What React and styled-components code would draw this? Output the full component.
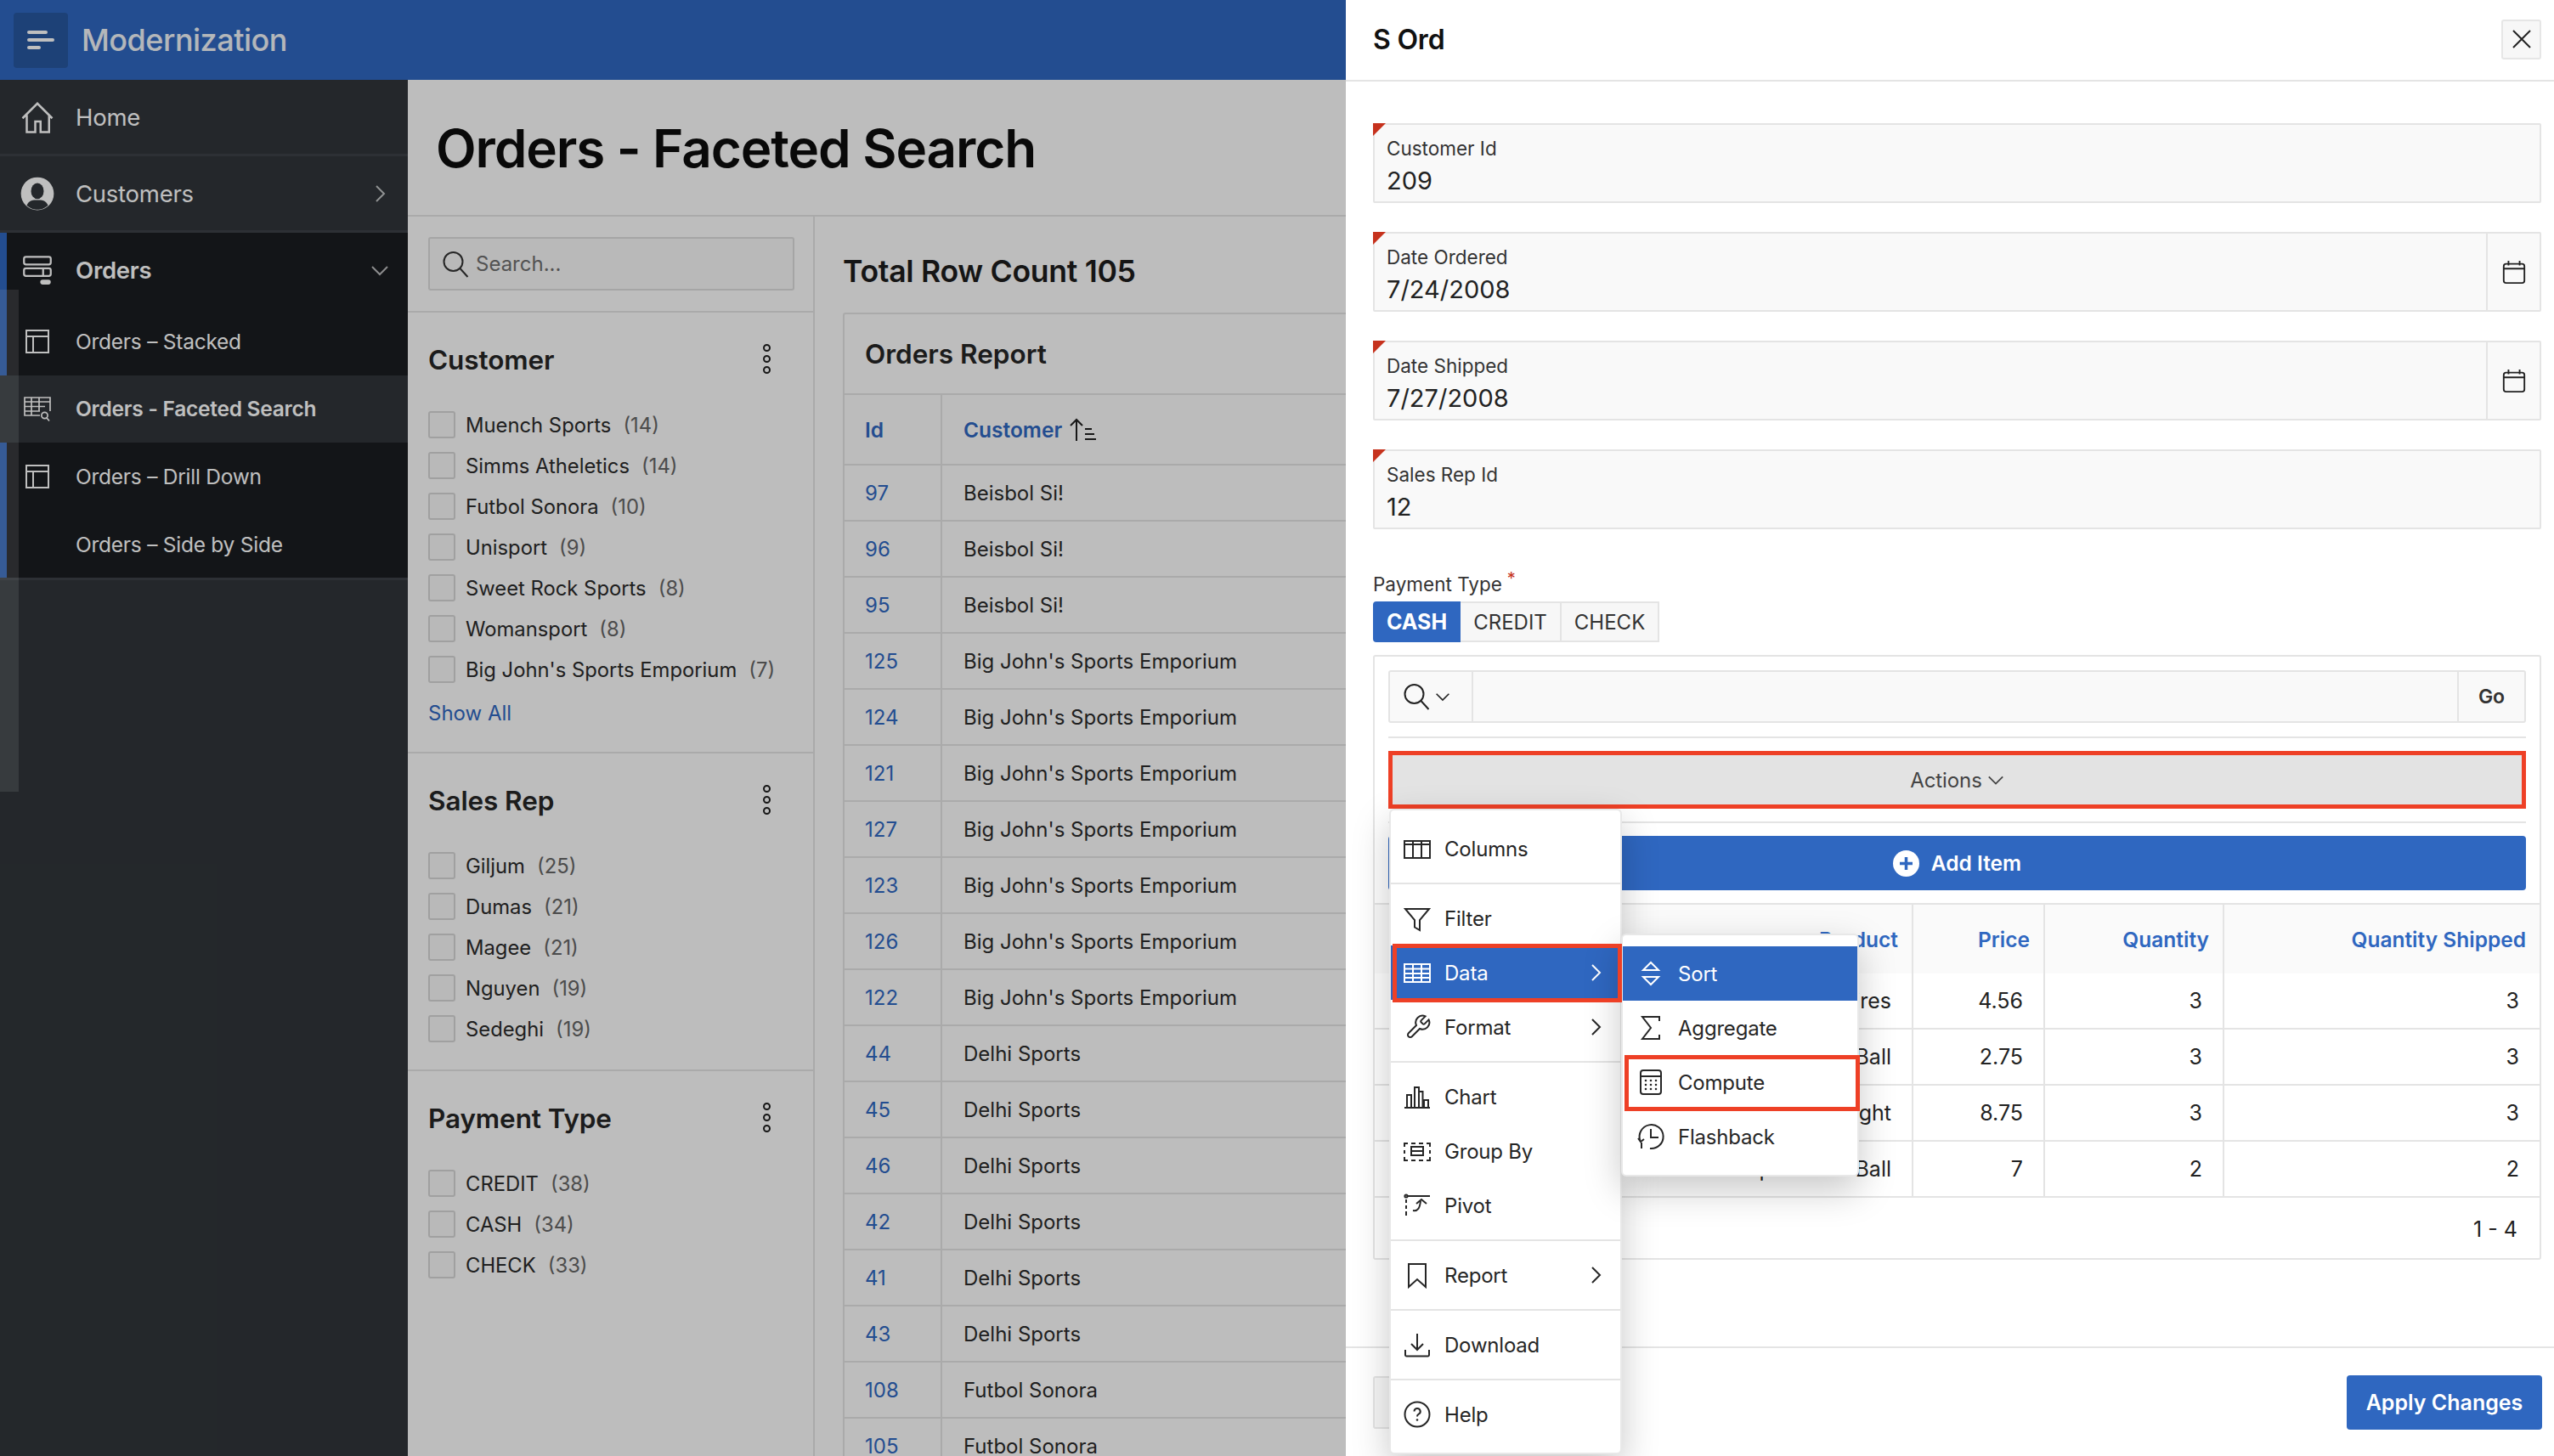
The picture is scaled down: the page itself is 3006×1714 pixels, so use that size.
import React from 'react';
import styled, { createGlobalStyle } from 'styled-components';

const Global = createGlobalStyle`
  html, body { margin: 0; padding: 0; background: #fff; }
  * { box-sizing: border-box; }
  body { font-family: Inter, "Noto Sans", "Liberation Sans", sans-serif; color: #1f1f1f; }
`;

const BLUE = '#2f67c0';
const RED = '#ee4026';
const LINE = '#e4e4e4';

const Svg = ({ size = 32, children, sw = 2, ...rest }) => (
  <svg width={size} height={size} viewBox="0 0 32 32" fill="none" stroke="currentColor" strokeWidth={sw} {...rest}>
    {children}
  </svg>
);

const icons = {
  home: <path d="M2 17 16 3l14 14M6 14v16h8V20h5v10h8V14" />,
  person: (
    <>
      <circle cx="16" cy="16" r="15.5" fill="currentColor" stroke="none" />
      <ellipse cx="16" cy="13.5" rx="6" ry="7.5" fill="#30353a" stroke="none" />
      <path d="M6 27c2-5 6-5 10-5s8 0 10 5c-3 3-7 4-10 4s-7-1-10-4z" fill="#30353a" stroke="none" />
    </>
  ),
  stack: (
    <>
      <rect x="2" y="2" width="28" height="8" rx="2" />
      <rect x="2" y="14" width="28" height="8" rx="2" />
      <path d="M22 14v8" />
      <rect x="19" y="26" width="11" height="5" rx="2.5" fill="currentColor" stroke="none" />
    </>
  ),
  layout: <path d="M3 3h26v26H3zM3 10h26M11 10v19" />,
  facet: (
    <>
      <path d="M19 24H1V3h30v16M1 8h30M1 13.5h24M1 19h18M9 3v21M18 3v16" strokeWidth="1.7" />
      <circle cx="24.5" cy="24" r="3.6" strokeWidth="1.7" />
      <path d="m27 27 3 3.5" strokeWidth="1.7" />
    </>
  ),
  search: (
    <>
      <circle cx="13.5" cy="13" r="11" />
      <path d="m21.5 21 9 10" />
    </>
  ),
  columns: <path d="M1 7h30v20H1zM1 11h30M11 7v20M21 7v20" />,
  filter: <path d="M2 5h28L19 18v12l-6-3.5V18z" />,
  data: <path d="M1 6h30v21H1zM1 11.5h30M1 17h30M1 22h30M11 6v21M21 6v21" />,
  wrench: (
    <path d="M20.6 8.4a1.3 1.3 0 0 0 0 1.9l2.1 2.1a1.3 1.3 0 0 0 1.9 0l5-5a8 8 0 0 1-10.6 10.6l-9.2 9.2a2.8 2.8 0 0 1-4-4l9.2-9.2A8 8 0 0 1 25.6 3.4z" />
  ),
  chart: <path d="M1 29h30M4 29V14h5v15M13 29V5h5v24M18 10h4.500v19M24 29V20h5v9" />,
  group: (
    <>
      <path d="M1 11V7h4M9 7h5M18 7h5M27 7h4v4M1 15v4M31 15v4M1 23v4h4M9 27h5M18 27h5M27 27h4v-4" />
      <rect x="9" y="11" width="14" height="10" />
      <path d="M9 16h14" />
    </>
  ),
  pivot: (
    <>
      <circle cx="3" cy="5" r="1.6" />
      <path d="M5 5h26M3 9v4M3 16v4M3 23v5" />
      <path d="M11 22c6 1 8-3 9-11M15 14l6-5 6 5" />
    </>
  ),
  bookmark: <path d="M6 3h20v27l-10-9-10 9z" />,
  download: <path d="M16 3v19M9 15l7 7 7-7M2 22v6a1.500 1.500 0 0 0 1.500 1.500h25A1.500 1.500 0 0 0 30 28v-6" />,
  help: (
    <>
      <circle cx="16" cy="16" r="14.500" />
      <path d="M12.500 12.500a3.600 3.600 0 1 1 5.300 3.200c-1.200.7-1.800 1.400-1.800 2.800" />
      <circle cx="16" cy="22.500" r="1.300" fill="currentColor" stroke="none" />
    </>
  ),
  sort: <path d="M7 12 16 3l9 9zM7 20l9 9 9-9z" />,
  sigma: <path d="M26 8V3H6l10 13L6 29h20v-5" />,
  calc: (
    <>
      <rect x="4" y="2" width="24" height="28" rx="3" />
      <path d="M4 9h24" />
      <path d="M10 14h.01M16 14h.01M22 14h.01M10 19h.01M16 19h.01M22 19h.01M10 24h.01M16 24h.01M22 24h.01" strokeWidth="2.600" strokeLinecap="round" />
    </>
  ),
  flash: (
    <>
      <path d="M3.500 21A14 14 0 1 1 15 30" />
      <path d="M16 7v10h9M1 18l3 4 4-3M5 30v-7" />
    </>
  ),
  calendar: (
    <>
      <rect x="3" y="6" width="26" height="24" rx="3" />
      <path d="M3 12h26M9 2v6M23 2v6" />
    </>
  ),
};

const Icon = ({ name, size, sw }) => <Svg size={size} sw={sw}>{icons[name]}</Svg>;

const Chevron = ({ dir = 'right', size = 22 }) => (
  <svg width={size} height={size} viewBox="0 0 22 22" fill="none" stroke="currentColor" strokeWidth="2">
    <path d={dir === 'right' ? 'M7 2l9 9-9 9' : 'M2 7l9 9 9-9'} />
  </svg>
);

const Stage = styled.div`
  position: relative;
  width: 3006px;
  height: 1714px;
  overflow: hidden;
  background: #fcfcfc;
`;

const TopBar = styled.header`
  height: 94px;
  background: #2f67c0;
  display: flex;
  align-items: center;
  padding-left: 16px;
  gap: 16px;
`;

const MenuToggle = styled.div`
  width: 64px;
  height: 65px;
  border-radius: 4px;
  background: #27579f;
  display: flex;
  align-items: center;
  justify-content: center;
  color: #fff;
`;

const Brand = styled.div`
  font-size: 36px;
  font-weight: 500;
  color: #f1f4f9;
  letter-spacing: -0.5px;
`;

const Body = styled.div`
  display: flex;
  height: 1620px;
`;

const Sidebar = styled.nav`
  position: relative;
  width: 480px;
  flex: none;
  background: #30353a;
`;

const NavRow = styled.div`
  display: flex;
  align-items: center;
  height: ${(p) => p.$h}px;
  padding: 0 24px;
  color: #fff;
  font-size: 27.5px;
  border-bottom: ${(p) => (p.$line ? '3px solid #3c4147' : 'none')};
  background: ${(p) => (p.$bg ? p.$bg : 'transparent')};
`;

const NavIcon = styled.span`
  width: 40px;
  flex: none;
  display: flex;
  justify-content: center;
  margin-right: 25px;
`;

const NavLabel = styled.span`
  flex: 1;
  font-weight: ${(p) => (p.$bold ? 600 : 400)};
  letter-spacing: -0.25px;
`;

const NavChevron = styled.span`
  display: flex;
  opacity: 0.7;
  margin-right: -2px;
`;

const OrdersGroup = styled.div`
  position: relative;
  background: #1a1c20;
  border-bottom: 3px solid #3c4147;
  box-shadow: inset 8px 0 0 #2f67c0;
`;

const SubRow = styled(NavRow)`
  height: 79.6px;
  font-size: 24.5px;
`;

const ScrollGhost = styled.div`
  position: absolute;
  left: 0;
  top: 247px;
  width: 22px;
  height: 591px;
  background: rgba(255, 255, 255, 0.13);
`;

const Main = styled.main`
  flex: 1;
  min-width: 0;
`;

const TitleBar = styled.div`
  height: 161px;
  padding: 2px 0 0 33px;
  display: flex;
  align-items: center;
  border-bottom: 2px solid #e3e3e3;
`;

const PageTitle = styled.h1`
  margin: 0;
  font-size: 62px;
  font-weight: 600;
  color: #0c0c0c;
  letter-spacing: -1.1px;
`;

const Columns = styled.div`
  display: flex;
`;

const Facets = styled.aside`
  width: 479px;
  flex: none;
  border-right: 2px solid #e3e3e3;
  height: 1460px;
`;

const SearchRow = styled.div`
  padding: 24px 22px 24px 24px;
  border-bottom: 2px solid #e3e3e3;
`;

const SearchBox = styled.div`
  height: 63px;
  border: 2px solid #dcdcdc;
  border-radius: 3px;
  background: #f7f7f7;
  display: flex;
  align-items: center;
  gap: 8px;
  padding-left: 14px;
  color: #333;
  font-size: 24px;
  span { color: #6f6f6f; }
`;

const FacetGroup = styled.section`
  padding: 35px 24px ${(p) => p.$pb}px;
  border-bottom: ${(p) => (p.$last ? 'none' : '2px solid #e3e3e3')};
`;

const FacetHead = styled.div`
  height: 40px;
  display: flex;
  align-items: center;
  justify-content: space-between;
  padding-right: 26px;
  margin-bottom: 33px;
  font-size: 31.5px;
  font-weight: 600;
  color: #262626;
  letter-spacing: -0.1px;
`;

const Kebab = styled.span`
  display: flex;
  flex-direction: column;
  gap: 4px;
  margin-top: -2px;
  i {
    display: block;
    width: 9px;
    height: 9px;
    border: 2px solid #1f1f1f;
    border-radius: 50%;
  }
`;

const FacetItem = styled.label`
  height: 48px;
  display: flex;
  align-items: center;
  gap: 12px;
  font-size: 23.8px;
  color: #2b2b2b;
  white-space: nowrap;
  em {
    font-style: normal;
    color: #666;
    margin-left: 14px;
  }
`;

const Check = styled.span`
  width: 32px;
  height: 32px;
  border: 2px solid #d6d6d6;
  border-radius: 3px;
  background: #f7f7f7;
  flex: none;
`;

const ShowAll = styled.div`
  margin-top: 14px;
  height: 28px;
  line-height: 28px;
  font-size: 24px;
  color: #2f67c0;
`;

const ReportArea = styled.div`
  flex: 1;
  min-width: 0;
  padding: 0 0 0 33px;
`;

const RowCount = styled.h2`
  margin: 0;
  height: 113px;
  padding-top: 42px;
  font-size: 35.6px;
  font-weight: 600;
  line-height: 46px;
  color: #1c1c1c;
  letter-spacing: -0.3px;
`;

const ReportCard = styled.div`
  width: 1600px;
  border: 2px solid #e3e3e3;
  border-radius: 3px;
`;

const ReportTitle = styled.div`
  height: 95px;
  padding-left: 24px;
  display: flex;
  align-items: center;
  font-size: 31.5px;
  font-weight: 600;
  color: #262626;
  border-bottom: 2px solid #e3e3e3;
`;

const ReportGrid = styled.div`
  display: grid;
  grid-template-columns: 115px 1fr;
  grid-template-rows: 83px;
  grid-auto-rows: 66px;
`;

const HeadCell = styled.div`
  display: flex;
  align-items: center;
  gap: 8px;
  padding-left: ${(p) => (p.$first ? 24 : 25)}px;
  font-size: 24.5px;
  font-weight: 600;
  color: #2f67c0;
  background: #fbfbfb;
  border-right: ${(p) => (p.$first ? '2px solid #e3e3e3' : 'none')};
  border-bottom: 2px solid #e3e3e3;
`;

const Cell = styled.div`
  display: flex;
  align-items: center;
  padding-left: ${(p) => (p.$link ? 24 : 25)}px;
  font-size: 24px;
  color: ${(p) => (p.$link ? '#2f67c0' : '#2b2b2b')};
  border-right: ${(p) => (p.$link ? '2px solid #e3e3e3' : 'none')};
  border-bottom: 2px solid #e3e3e3;
`;

const Scrim = styled.div`
  position: absolute;
  inset: 0;
  background: rgba(0, 0, 0, 0.25);
`;

const Dialog = styled.div`
  position: absolute;
  top: 0;
  right: 0;
  bottom: 0;
  width: 1422px;
  background: #fff;
  display: flex;
  flex-direction: column;
`;

const DialogHead = styled.div`
  height: 96px;
  flex: none;
  display: flex;
  align-items: center;
  justify-content: space-between;
  padding: 0 15px 2px 32px;
  border-bottom: 2px solid ${LINE};
`;

const DialogTitle = styled.div`
  font-size: 32px;
  font-weight: 600;
  color: #111;
  letter-spacing: -0.2px;
`;

const CloseBtn = styled.div`
  width: 47px;
  height: 47px;
  border: 2px solid #e6e6e6;
  border-radius: 3px;
  background: #f7f7f7;
  display: flex;
  align-items: center;
  justify-content: center;
  color: #222;
`;

const DialogBody = styled.div`
  flex: 1;
  padding: 49px 15px 0 32px;
  display: flex;
  flex-direction: column;
`;

const FieldBox = styled.div`
  position: relative;
  height: 94px;
  margin-bottom: 34px;
  display: flex;
  border: 2px solid ${LINE};
  border-radius: 2px;
  background: #f9f9f9;
  &::before {
    content: '';
    position: absolute;
    top: -2px;
    left: -2px;
    width: 15px;
    height: 15px;
    background: #c6321d;
    clip-path: polygon(0 0, 100% 0, 0 100%);
  }
`;

const FieldText = styled.div`
  flex: 1;
  padding: 14px 0 0 14px;
`;

const FieldLabel = styled.div`
  font-size: 22.5px;
  line-height: 27px;
  color: #333;
`;

const FieldValue = styled.div`
  margin-top: 7px;
  font-size: 29px;
  line-height: 36px;
  color: #222;
`;

const FieldAddon = styled.div`
  width: 63px;
  flex: none;
  border-left: 2px solid ${LINE};
  display: flex;
  align-items: center;
  justify-content: center;
  color: #222;
`;

const RadioLabel = styled.div`
  margin-top: 15px;
  height: 36px;
  line-height: 32px;
  font-size: 22.5px;
  color: #333;
  sup {
    color: #c6321d;
    font-size: 20px;
    line-height: 0;
    margin-left: 6px;
  }
`;

const RadioRow = styled.div`
  display: flex;
  margin-bottom: 15px;
`;

const RadioBtn = styled.div`
  height: 48px;
  display: flex;
  align-items: center;
  padding: 0 ${(p) => (p.$on ? 16 : 15)}px;
  font-size: ${(p) => (p.$on ? 25 : 24)}px;
  font-weight: ${(p) => (p.$on ? 700 : 400)};
  color: ${(p) => (p.$on ? '#fff' : '#333')};
  background: ${(p) => (p.$on ? BLUE : '#f7f7f7')};
  border: ${(p) => (p.$on ? 'none' : `2px solid ${LINE}`)};
  border-left: none;
  border-radius: ${(p) => (p.$on ? '4px 0 0 4px' : '0')};
`;

const GridCard = styled.div`
  position: relative;
  height: 712px;
  border: 2px solid ${LINE};
  border-radius: 3px;
  padding: 16px 0 0;
`;

const GridTools = styled.div`
  padding: 0 16px;
`;

const SearchBar = styled.div`
  height: 62px;
  display: flex;
  border: 2px solid ${LINE};
  border-radius: 3px;
  background: #f9f9f9;
`;

const SearchPick = styled.div`
  width: 98px;
  flex: none;
  display: flex;
  align-items: center;
  gap: 6px;
  padding-left: 15px;
  color: #222;
  border-right: 2px solid ${LINE};
`;

const SearchFill = styled.div`
  flex: 1;
`;

const GoBtn = styled.div`
  width: 79px;
  flex: none;
  display: flex;
  align-items: center;
  justify-content: center;
  font-size: 23px;
  font-weight: 600;
  color: #333;
  border-left: 2px solid ${LINE};
`;

const ToolRule = styled.div`
  height: 2px;
  margin-top: 16px;
  background: ${LINE};
`;

const ActionsBtn = styled.div`
  height: 68px;
  margin-top: 15px;
  display: flex;
  align-items: center;
  justify-content: center;
  gap: 6px;
  font-size: 24px;
  letter-spacing: -0.1px;
  color: #444;
  background: #e3e3e3;
  border: 5px solid ${RED};
`;

const AddRule = styled.div`
  height: 2px;
  margin-top: 15px;
  background: ${LINE};
`;

const AddBtn = styled.div`
  height: 64px;
  margin-top: 15px;
  display: flex;
  align-items: center;
  justify-content: center;
  gap: 14px;
  background: ${BLUE};
  border-radius: 4px;
  font-size: 24.5px;
  font-weight: 600;
  color: #fff;
`;

const PlusDisc = styled.span`
  width: 31px;
  height: 31px;
  border-radius: 50%;
  background: #fff;
  color: ${BLUE};
  display: flex;
  align-items: center;
  justify-content: center;
`;

const ItemGrid = styled.div`
  margin-top: 15px;
  display: grid;
  grid-template-columns: 634px 155px 211px 1fr;
  grid-template-rows: 81px;
  grid-auto-rows: 66px;
  border-top: 2px solid ${LINE};
`;

const ItemHead = styled.div`
  display: flex;
  align-items: center;
  justify-content: flex-end;
  padding-right: 16px;
  background: #fafafa;
  font-size: 24.5px;
  font-weight: 600;
  color: ${BLUE};
  border-right: ${(p) => (p.$end ? 'none' : `2px solid ${LINE}`)};
`;

const ItemCell = styled.div`
  display: flex;
  align-items: center;
  justify-content: flex-end;
  padding-right: 24px;
  font-size: 25px;
  color: #222;
  border-right: ${(p) => (p.$end ? 'none' : `2px solid ${LINE}`)};
  border-bottom: 2px solid ${LINE};
`;

const Pager = styled.div`
  height: 74px;
  display: flex;
  align-items: center;
  justify-content: flex-end;
  padding-right: 26px;
  font-size: 25px;
  color: #222;
`;

const DialogFoot = styled.div`
  height: 129px;
  flex: none;
  display: flex;
  align-items: center;
  justify-content: space-between;
  padding: 0 14px 0 32px;
  border-top: 2px solid ${LINE};
`;

const CancelBtn = styled.div`
  width: 110px;
  height: 62px;
  border: 2px solid ${LINE};
  border-radius: 3px;
  background: #f7f7f7;
`;

const ApplyBtn = styled.div`
  width: 230px;
  height: 64px;
  display: flex;
  align-items: center;
  justify-content: center;
  background: ${BLUE};
  border-radius: 4px;
  font-size: 25px;
  font-weight: 600;
  color: #fff;
`;

const Menu = styled.div`
  position: absolute;
  left: ${(p) => p.$x}px;
  top: ${(p) => p.$y}px;
  width: ${(p) => p.$w}px;
  padding: 13px 0;
  background: #fff;
  border: 2px solid #e8e8e8;
  border-radius: 6px;
  box-shadow: 0 16px 44px rgba(0, 0, 0, 0.22);
`;

const MenuRule = styled.div`
  height: 2px;
  margin: 8px 0;
  background: ${LINE};
`;

const MenuItem = styled.div`
  position: relative;
  height: 64px;
  display: flex;
  align-items: center;
  padding: 0 18px 0 ${(p) => p.$pl}px;
  font-size: 24px;
  letter-spacing: -0.2px;
  color: ${(p) => (p.$on ? '#fff' : '#262626')};
  background: ${(p) => (p.$on ? BLUE : 'transparent')};
  span.label { flex: 1; margin-left: 16px; }
  ${(p) =>
    p.$mark &&
    `&::after {
      content: '';
      position: absolute;
      z-index: 3;
      inset: ${p.$mark};
      border: 5px solid ${RED};
    }`}
`;

const reportRows = [
  ['97', 'Beisbol Si!'], ['96', 'Beisbol Si!'], ['95', 'Beisbol Si!'],
  ['125', "Big John's Sports Emporium"], ['124', "Big John's Sports Emporium"],
  ['121', "Big John's Sports Emporium"], ['127', "Big John's Sports Emporium"],
  ['123', "Big John's Sports Emporium"], ['126', "Big John's Sports Emporium"],
  ['122', "Big John's Sports Emporium"], ['44', 'Delhi Sports'], ['45', 'Delhi Sports'],
  ['46', 'Delhi Sports'], ['42', 'Delhi Sports'], ['41', 'Delhi Sports'], ['43', 'Delhi Sports'],
  ['108', 'Futbol Sonora'], ['105', 'Futbol Sonora'],
];

const facetGroups = [
  {
    name: 'Customer', pb: 31, more: true,
    items: [['Muench Sports', 14], ['Simms Atheletics', 14], ['Futbol Sonora', 10], ['Unisport', 9], ['Sweet Rock Sports', 8], ['Womansport', 8], ["Big John's Sports Emporium", 7]],
  },
  {
    name: 'Sales Rep', pb: 24,
    items: [['Giljum', 25], ['Dumas', 21], ['Magee', 21], ['Nguyen', 19], ['Sedeghi', 19]],
  },
  {
    name: 'Payment Type', pb: 24, last: true,
    items: [['CREDIT', 38], ['CASH', 34], ['CHECK', 33]],
  },
];

const orderLines = [
  ['Tires', '4.56', 3, 3],
  ['Soccer Ball', '2.75', 3, 3],
  ['Bike Light', '8.75', 3, 3],
  ['World Cup Soccer Ball', '7', 2, 2],
];

const fields = [
  { label: 'Customer Id', value: '209' },
  { label: 'Date Ordered', value: '7/24/2008', date: true },
  { label: 'Date Shipped', value: '7/27/2008', date: true },
  { label: 'Sales Rep Id', value: '12' },
];

const Item = ({ icon, label, chevron, on, mark, sub }) => (
  <MenuItem $on={on} $mark={mark} $pl={sub ? 17 : 15}>
    <Icon name={icon} />
    <span className="label">{label}</span>
    {chevron && <Chevron />}
  </MenuItem>
);

export default function App() {
  return (
    <Stage>
      <Global />
      <TopBar>
        <MenuToggle>
          <svg width="32" height="26" viewBox="0 0 32 26" fill="#fff">
            <rect x="0" y="2" width="24" height="4" rx="2" />
            <rect x="0" y="11" width="32" height="4" rx="2" />
            <rect x="0" y="20" width="16" height="4" rx="2" />
          </svg>
        </MenuToggle>
        <Brand>Modernization</Brand>
      </TopBar>
      <Body>
        <Sidebar>
          <NavRow $h={90} $line>
            <NavIcon><Icon name="home" size={40} /></NavIcon>
            <NavLabel>Home</NavLabel>
          </NavRow>
          <NavRow $h={90} $line>
            <NavIcon><Icon name="person" size={40} /></NavIcon>
            <NavLabel>Customers</NavLabel>
            <NavChevron><Chevron /></NavChevron>
          </NavRow>
          <OrdersGroup>
            <NavRow $h={88}>
              <NavIcon><Icon name="stack" size={36} /></NavIcon>
              <NavLabel $bold>Orders</NavLabel>
              <NavChevron><Chevron dir="down" /></NavChevron>
            </NavRow>
            <SubRow>
              <NavIcon><Icon name="layout" size={32} /></NavIcon>
              <NavLabel>Orders – Stacked</NavLabel>
            </SubRow>
            <SubRow $bg="#30353a">
              <NavIcon><Icon name="facet" size={32} /></NavIcon>
              <NavLabel $bold>Orders - Faceted Search</NavLabel>
            </SubRow>
            <SubRow>
              <NavIcon><Icon name="layout" size={32} /></NavIcon>
              <NavLabel>Orders – Drill Down</NavLabel>
            </SubRow>
            <SubRow>
              <NavIcon />
              <NavLabel>Orders – Side by Side</NavLabel>
            </SubRow>
          </OrdersGroup>
          <ScrollGhost />
        </Sidebar>
        <Main>
          <TitleBar>
            <PageTitle>Orders - Faceted Search</PageTitle>
          </TitleBar>
          <Columns>
            <Facets>
              <SearchRow>
                <SearchBox>
                  <Icon name="search" />
                  <span>Search...</span>
                </SearchBox>
              </SearchRow>
              {facetGroups.map((g) => (
                <FacetGroup key={g.name} $pb={g.pb} $last={g.last}>
                  <FacetHead>
                    {g.name}
                    <Kebab><i /><i /><i /></Kebab>
                  </FacetHead>
                  {g.items.map(([n, c]) => (
                    <FacetItem key={n}>
                      <Check />
                      <span>{n}<em>({c})</em></span>
                    </FacetItem>
                  ))}
                  {g.more && <ShowAll>Show All</ShowAll>}
                </FacetGroup>
              ))}
            </Facets>
            <ReportArea>
              <RowCount>Total Row Count 105</RowCount>
              <ReportCard>
                <ReportTitle>Orders Report</ReportTitle>
                <ReportGrid>
                  <HeadCell $first>Id</HeadCell>
                  <HeadCell>
                    Customer
                    <svg width="32" height="28" viewBox="0 0 32 28" fill="none" stroke="#1f1f1f" strokeWidth="2">
                      <path d="M9 27V2M2 9l7-7 7 7M19 13h8M19 19h11M19 25h13" />
                    </svg>
                  </HeadCell>
                  {reportRows.map(([id, name]) => (
                    <React.Fragment key={id}>
                      <Cell $link>{id}</Cell>
                      <Cell>{name}</Cell>
                    </React.Fragment>
                  ))}
                </ReportGrid>
              </ReportCard>
            </ReportArea>
          </Columns>
        </Main>
      </Body>
      <Scrim />
      <Dialog>
        <DialogHead>
          <DialogTitle>S Ord</DialogTitle>
          <CloseBtn>
            <svg width="24" height="24" viewBox="0 0 24 24" stroke="currentColor" strokeWidth="2">
              <path d="M2 2l20 20M22 2 2 22" />
            </svg>
          </CloseBtn>
        </DialogHead>
        <DialogBody>
          {fields.map((f) => (
            <FieldBox key={f.label}>
              <FieldText>
                <FieldLabel>{f.label}</FieldLabel>
                <FieldValue>{f.value}</FieldValue>
              </FieldText>
              {f.date && <FieldAddon><Icon name="calendar" size={30} /></FieldAddon>}
            </FieldBox>
          ))}
          <RadioLabel>Payment Type<sup>*</sup></RadioLabel>
          <RadioRow>
            <RadioBtn $on>CASH</RadioBtn>
            <RadioBtn>CREDIT</RadioBtn>
            <RadioBtn>CHECK</RadioBtn>
          </RadioRow>
          <GridCard>
            <GridTools>
              <SearchBar>
                <SearchPick>
                  <Icon name="search" />
                  <Chevron dir="down" size={18} />
                </SearchPick>
                <SearchFill />
                <GoBtn>Go</GoBtn>
              </SearchBar>
              <ToolRule />
              <ActionsBtn>
                Actions
                <Chevron dir="down" size={20} />
              </ActionsBtn>
              <AddRule />
              <AddBtn>
                <PlusDisc>
                  <svg width="17" height="17" viewBox="0 0 17 17" stroke="currentColor" strokeWidth="3.5">
                    <path d="M8.5 1v15M1 8.5h15" />
                  </svg>
                </PlusDisc>
                Add Item
              </AddBtn>
            </GridTools>
            <ItemGrid>
              <ItemHead>Product</ItemHead>
              <ItemHead>Price</ItemHead>
              <ItemHead>Quantity</ItemHead>
              <ItemHead $end>Quantity Shipped</ItemHead>
              {orderLines.map(([p, price, q, s], i) => (
                <React.Fragment key={i}>
                  <ItemCell>{p}</ItemCell>
                  <ItemCell>{price}</ItemCell>
                  <ItemCell>{q}</ItemCell>
                  <ItemCell $end>{s}</ItemCell>
                </React.Fragment>
              ))}
            </ItemGrid>
            <Pager>1 - 4</Pager>
            <Menu $x={17} $y={179} $w={274}>
              <Item icon="columns" label="Columns" />
              <MenuRule />
              <Item icon="filter" label="Filter" />
              <Item icon="data" label="Data" chevron on mark="-2px -2px -3px 2px" />
              <Item icon="wrench" label="Format" chevron />
              <MenuRule />
              <Item icon="chart" label="Chart" />
              <Item icon="group" label="Group By" />
              <Item icon="pivot" label="Pivot" />
              <MenuRule />
              <Item icon="bookmark" label="Report" chevron />
              <MenuRule />
              <Item icon="download" label="Download" />
              <MenuRule />
              <Item icon="help" label="Help" />
              <Menu $x={271} $y={145} $w={280}>
                <Item sub icon="sort" label="Sort" on />
                <Item sub icon="sigma" label="Aggregate" />
                <Item sub icon="calc" label="Compute" mark="0 -3px -2px 2px" />
                <Item sub icon="flash" label="Flashback" />
              </Menu>
            </Menu>
          </GridCard>
        </DialogBody>
        <DialogFoot>
          <CancelBtn />
          <ApplyBtn>Apply Changes</ApplyBtn>
        </DialogFoot>
      </Dialog>
    </Stage>
  );
}
